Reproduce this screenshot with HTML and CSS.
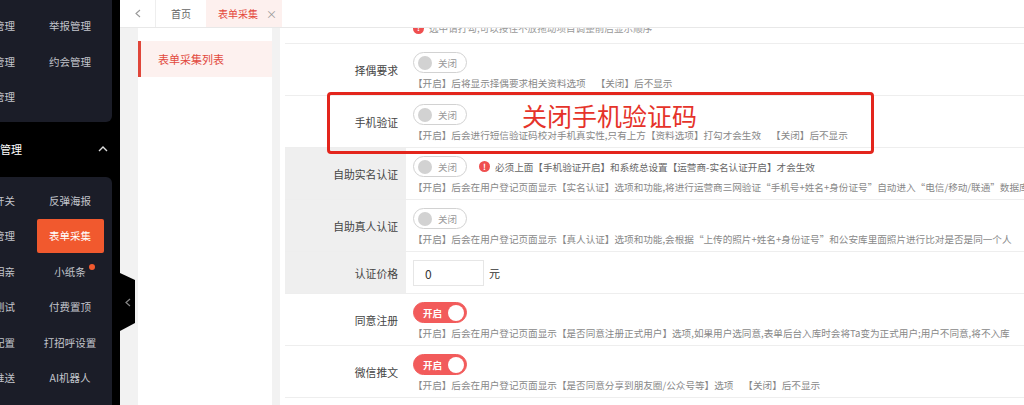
FILE: index.html
```html
<!DOCTYPE html>
<html>

<head>
	<meta charset="utf-8">
	<link rel="stylesheet" href="styles.css">
</head>

<body>
	<div class="app">
		<aside class="side">
			<div class="grp top">
				<div class="item"><span>会员管理</span></div>
				<div class="item"><span>举报管理</span></div>
				<div class="item"><span>相册管理</span></div>
				<div class="item"><span>约会管理</span></div>
				<div class="item"><span>动态管理</span></div>
				<div class="item"></div>
			</div>
			<div class="sec">
				<span class="sec-name">功能管理</span>
				<svg class="chev" width="10" height="6" viewBox="0 0 10 6"><polyline points="1,5 5,1 9,5" fill="none" stroke="#ddd" stroke-width="1.4" /></svg>
			</div>
			<div class="grp low">
				<div class="item"><span>功能开关</span></div>
				<div class="item"><span>反弹海报</span></div>
				<div class="item"><span>红娘管理</span></div>
				<div class="item on"><span>表单采集</span></div>
				<div class="item"><span>线下相亲</span></div>
				<div class="item"><span class="has-dot">小纸条<i class="dot"></i></span></div>
				<div class="item"><span>接口测试</span></div>
				<div class="item"><span>付费置顶</span></div>
				<div class="item"><span>支付配置</span></div>
				<div class="item"><span>打招呼设置</span></div>
				<div class="item"><span>消息推送</span></div>
				<div class="item"><span>AI机器人</span></div>
			</div>
		</aside>

		<div class="fold">
			<svg width="6" height="9" viewBox="0 0 6 9"><polyline points="5,1 1,4.5 5,8" fill="none" stroke="#888" stroke-width="1.2" /></svg>
		</div>

		<main class="main">
			<div class="tabs">
				<div class="tab-back">
					<svg width="6" height="9" viewBox="0 0 6 9"><polyline points="5,1 1,4.5 5,8" fill="none" stroke="#999" stroke-width="1.1" /></svg>
				</div>
				<div class="tab">首页</div>
				<div class="tab on">表单采集<span class="close">×</span></div>
			</div>

			<div class="body">
				<nav class="subnav">
					<div class="sub-item">表单采集列表</div>
				</nav>

				<section class="content">
					<div class="row cut">
						<div class="label"></div>
						<div class="val">
							<div class="tip"><span class="bang">!</span>选中请打勾,可以按住不放拖动项目调整前后显示顺序</div>
						</div>
					</div>

					<div class="row">
						<div class="label">择偶要求</div>
						<div class="val">
							<div class="ctl"><span class="sw"><i class="knob"></i><span class="txt">关闭</span></span></div>
							<div class="desc">【开启】后将显示择偶要求相关资料选项<span class="gap">【关闭】后不显示</span></div>
						</div>
					</div>

					<div class="row">
						<div class="label">手机验证</div>
						<div class="val">
							<div class="ctl"><span class="sw"><i class="knob"></i><span class="txt">关闭</span></span></div>
							<div class="desc">【开启】后会进行短信验证码校对手机真实性,只有上方【资料选项】打勾才会生效<span class="gap">【关闭】后不显示</span></div>
						</div>
					</div>

					<div class="row">
						<div class="label shade">自助实名认证</div>
						<div class="val">
							<div class="ctl">
								<span class="sw"><i class="knob"></i><span class="txt">关闭</span></span>
								<span class="warn"><span class="bang">!</span>必须上面【手机验证开启】和系统总设置【运营商-实名认证开启】才会生效</span>
							</div>
							<div class="desc">【开启】后会在用户登记页面显示【实名认证】选项和功能,将进行运营商三网验证“手机号+姓名+身份证号”自动进入“电信/移动/联通”数据库验证是否一致</div>
						</div>
					</div>

					<div class="row">
						<div class="label shade">自助真人认证</div>
						<div class="val">
							<div class="ctl"><span class="sw"><i class="knob"></i><span class="txt">关闭</span></span></div>
							<div class="desc">【开启】后会在用户登记页面显示【真人认证】选项和功能,会根据“上传的照片+姓名+身份证号”和公安库里面照片进行比对是否是同一个人<span class="gap">【关闭】后不显示</span></div>
						</div>
					</div>

					<div class="row">
						<div class="label shade">认证价格</div>
						<div class="val price">
							<input class="ipt" type="text" value="0" />
							<span class="unit">元</span>
						</div>
					</div>

					<div class="row">
						<div class="label">同意注册</div>
						<div class="val">
							<div class="ctl"><span class="sw on"><span class="txt">开启</span><i class="knob"></i></span></div>
							<div class="desc">【开启】后会在用户登记页面显示【是否同意注册正式用户】选项,如果用户选同意,表单后台入库时会将Ta变为正式用户;用户不同意,将不入库</div>
						</div>
					</div>

					<div class="row">
						<div class="label">微信推文</div>
						<div class="val">
							<div class="ctl"><span class="sw on"><span class="txt">开启</span><i class="knob"></i></span></div>
							<div class="desc">【开启】后会在用户登记页面显示【是否同意分享到朋友圈/公众号等】选项<span class="gap">【关闭】后不显示</span></div>
						</div>
					</div>

					<div class="row last">
						<div class="label"></div>
						<div class="val">
							<div class="bar"></div>
						</div>
					</div>
				</section>
			</div>
		</main>

		<div class="mark"><span>关闭手机验证码</span></div>
	</div>
</body>

</html>
```

FILE: styles.css
```css
body {
	margin: 0;
	font-family: "Noto Sans CJK SC", "Noto Sans", sans-serif;
}

.app {
	position: relative;
	display: flex;
	height: 405px;
	overflow: hidden;
}

/* sidebar */
.side {
	width: 120px;
	flex: none;
	display: flex;
	flex-direction: column;
	background: #000;
	overflow: hidden;
}

.grp {
	display: grid;
	grid-template-columns: 76px 76px;
	grid-auto-rows: 35.5px;
	align-content: start;
	width: 152px;
	margin-left: -44px;
	padding: 8px 4px 7px 0;
	background: #1b1d28;
	color: #c3c5cc;
	font-size: 10.5px;
}

.grp.top {
	border-radius: 0 0 6px 6px;
}

.grp.low {
	flex: 1;
	padding-top: 6px;
	border-radius: 0 6px 0 0;
}

.item {
	display: flex;
	align-items: center;
	justify-content: center;
	white-space: nowrap;
}

.item.on span {
	display: flex;
	align-items: center;
	justify-content: center;
	width: 67px;
	height: 34px;
	border-radius: 2px;
	background: #f1592e;
	color: #fff;
}

.has-dot {
	position: relative;
}

.dot {
	position: absolute;
	right: -9px;
	top: 0;
	width: 6px;
	height: 6px;
	border-radius: 50%;
	background: #f1592e;
}

.sec {
	display: flex;
	align-items: center;
	height: 55px;
	color: #fff;
	font-size: 11px;
}

.sec-name {
	margin-left: -22px;
	white-space: nowrap;
}

.chev {
	margin-left: auto;
	margin-right: 12px;
}

.fold {
	position: absolute;
	left: 120px;
	top: 273px;
	width: 15px;
	height: 58px;
	display: flex;
	align-items: center;
	justify-content: center;
	background: #000;
	clip-path: polygon(0 0, 100% 7px, 100% 50px, 0 100%);
}

/* main */
.main {
	flex: 1;
	display: flex;
	flex-direction: column;
	min-width: 0;
}

.tabs {
	display: flex;
	height: 27px;
	border-bottom: 1px solid #e8e8e8;
	background: #fff;
	font-size: 10px;
	color: #666;
}

.tab-back {
	display: flex;
	align-items: center;
	justify-content: center;
	width: 35px;
	border-right: 1px solid #eee;
}

.tab {
	display: flex;
	align-items: center;
	justify-content: center;
	width: 50px;
}

.tab.on {
	width: 76px;
	justify-content: flex-start;
	padding-left: 12px;
	box-sizing: border-box;
	background: #fdf0ee;
	color: #e4473b;
}

.close {
	margin-left: 8px;
	color: #999;
	font-size: 11px;
}

.body {
	flex: 1;
	display: flex;
	min-height: 0;
	padding-left: 18px;
	background: #f2f2f2;
}

.subnav {
	width: 134px;
	flex: none;
	padding-top: 13px;
	background: #fff;
}

.sub-item {
	display: flex;
	align-items: center;
	height: 36px;
	padding-left: 17px;
	border-left: 3px solid #e0463a;
	background: #fdf1ef;
	color: #e2493d;
	font-size: 11px;
}

.content {
	flex: 1;
	min-width: 0;
	margin-left: 8px;
	padding-left: 5px;
	background: #fff;
	overflow: hidden;
}

.row {
	display: flex;
	border-bottom: 1px solid #eee;
}

.label {
	width: 121px;
	flex: none;
	display: flex;
	align-items: center;
	justify-content: flex-end;
	padding-right: 8px;
	box-sizing: border-box;
	font-size: 10.8px;
	color: #444;
}

.label.shade {
	background: #efefef;
}

.val {
	flex: 1;
	min-width: 0;
	padding: 8px 0 5px 7px;
	overflow: hidden;
}

.row.cut {
	height: 15px;
	overflow: hidden;
}

.row.cut .val {
	padding: 0 0 0 7px;
}

.tip {
	display: flex;
	align-items: center;
	height: 14px;
	margin-top: -7px;
	font-size: 9.6px;
	color: #999;
	white-space: nowrap;
}

.row.last {
	border-bottom: none;
}

.row.last .val {
	padding: 7px 0 0 7px;
}

.bar {
	height: 20px;
	background: #f3f4f7;
}

.ctl {
	display: flex;
	align-items: center;
	height: 21px;
}

.desc {
	margin-top: 3px;
	font-size: 9.6px;
	line-height: 14px;
	color: #888;
	white-space: nowrap;
}

.gap {
	margin-left: 10px;
}

/* switch */
.sw {
	display: flex;
	align-items: center;
	flex: none;
	width: 54px;
	height: 21px;
	box-sizing: border-box;
	border: 1px solid #d2d2d2;
	border-radius: 11px;
	background: #fff;
	font-size: 9.5px;
	color: #999;
}

.knob {
	width: 14px;
	height: 14px;
	margin-left: 4px;
	border-radius: 50%;
	background: #d2d2d2;
}

.sw .txt {
	margin-left: 6px;
}

.sw.on {
	border-color: #f25b5b;
	background: #f25b5b;
	color: #fff;
}

.sw.on .txt {
	margin-left: 9px;
	font-weight: bold;
}

.sw.on .knob {
	width: 16px;
	height: 16px;
	margin-left: auto;
	margin-right: 2px;
	background: #fff;
}

.warn {
	display: flex;
	align-items: center;
	margin-left: 12px;
	font-size: 9.6px;
	color: #666;
	white-space: nowrap;
}

.bang {
	display: flex;
	align-items: center;
	justify-content: center;
	flex: none;
	width: 11px;
	height: 11px;
	margin-right: 5px;
	border-radius: 50%;
	background: #ef4f4f;
	color: #fff;
	font-size: 8px;
	font-weight: bold;
	line-height: 1;
}

.price {
	display: flex;
	align-items: center;
	padding-bottom: 7px;
}

.ipt {
	width: 71px;
	height: 26px;
	box-sizing: border-box;
	margin: 0;
	padding: 0 0 0 11px;
	border: 1px solid #e6e6e6;
	outline: none;
	font-family: inherit;
	font-size: 12px;
	color: #333;
}

.unit {
	margin-left: 5px;
	font-size: 11px;
	color: #333;
}

/* annotation */
.mark {
	position: absolute;
	left: 327px;
	top: 92px;
	width: 547px;
	height: 62px;
	box-sizing: border-box;
	border: 3px solid #e3251c;
	border-radius: 4px;
}

.mark span {
	position: absolute;
	left: 192px;
	top: 8px;
	font-size: 25px;
	line-height: 25px;
	color: #e5332a;
	white-space: nowrap;
}
```
